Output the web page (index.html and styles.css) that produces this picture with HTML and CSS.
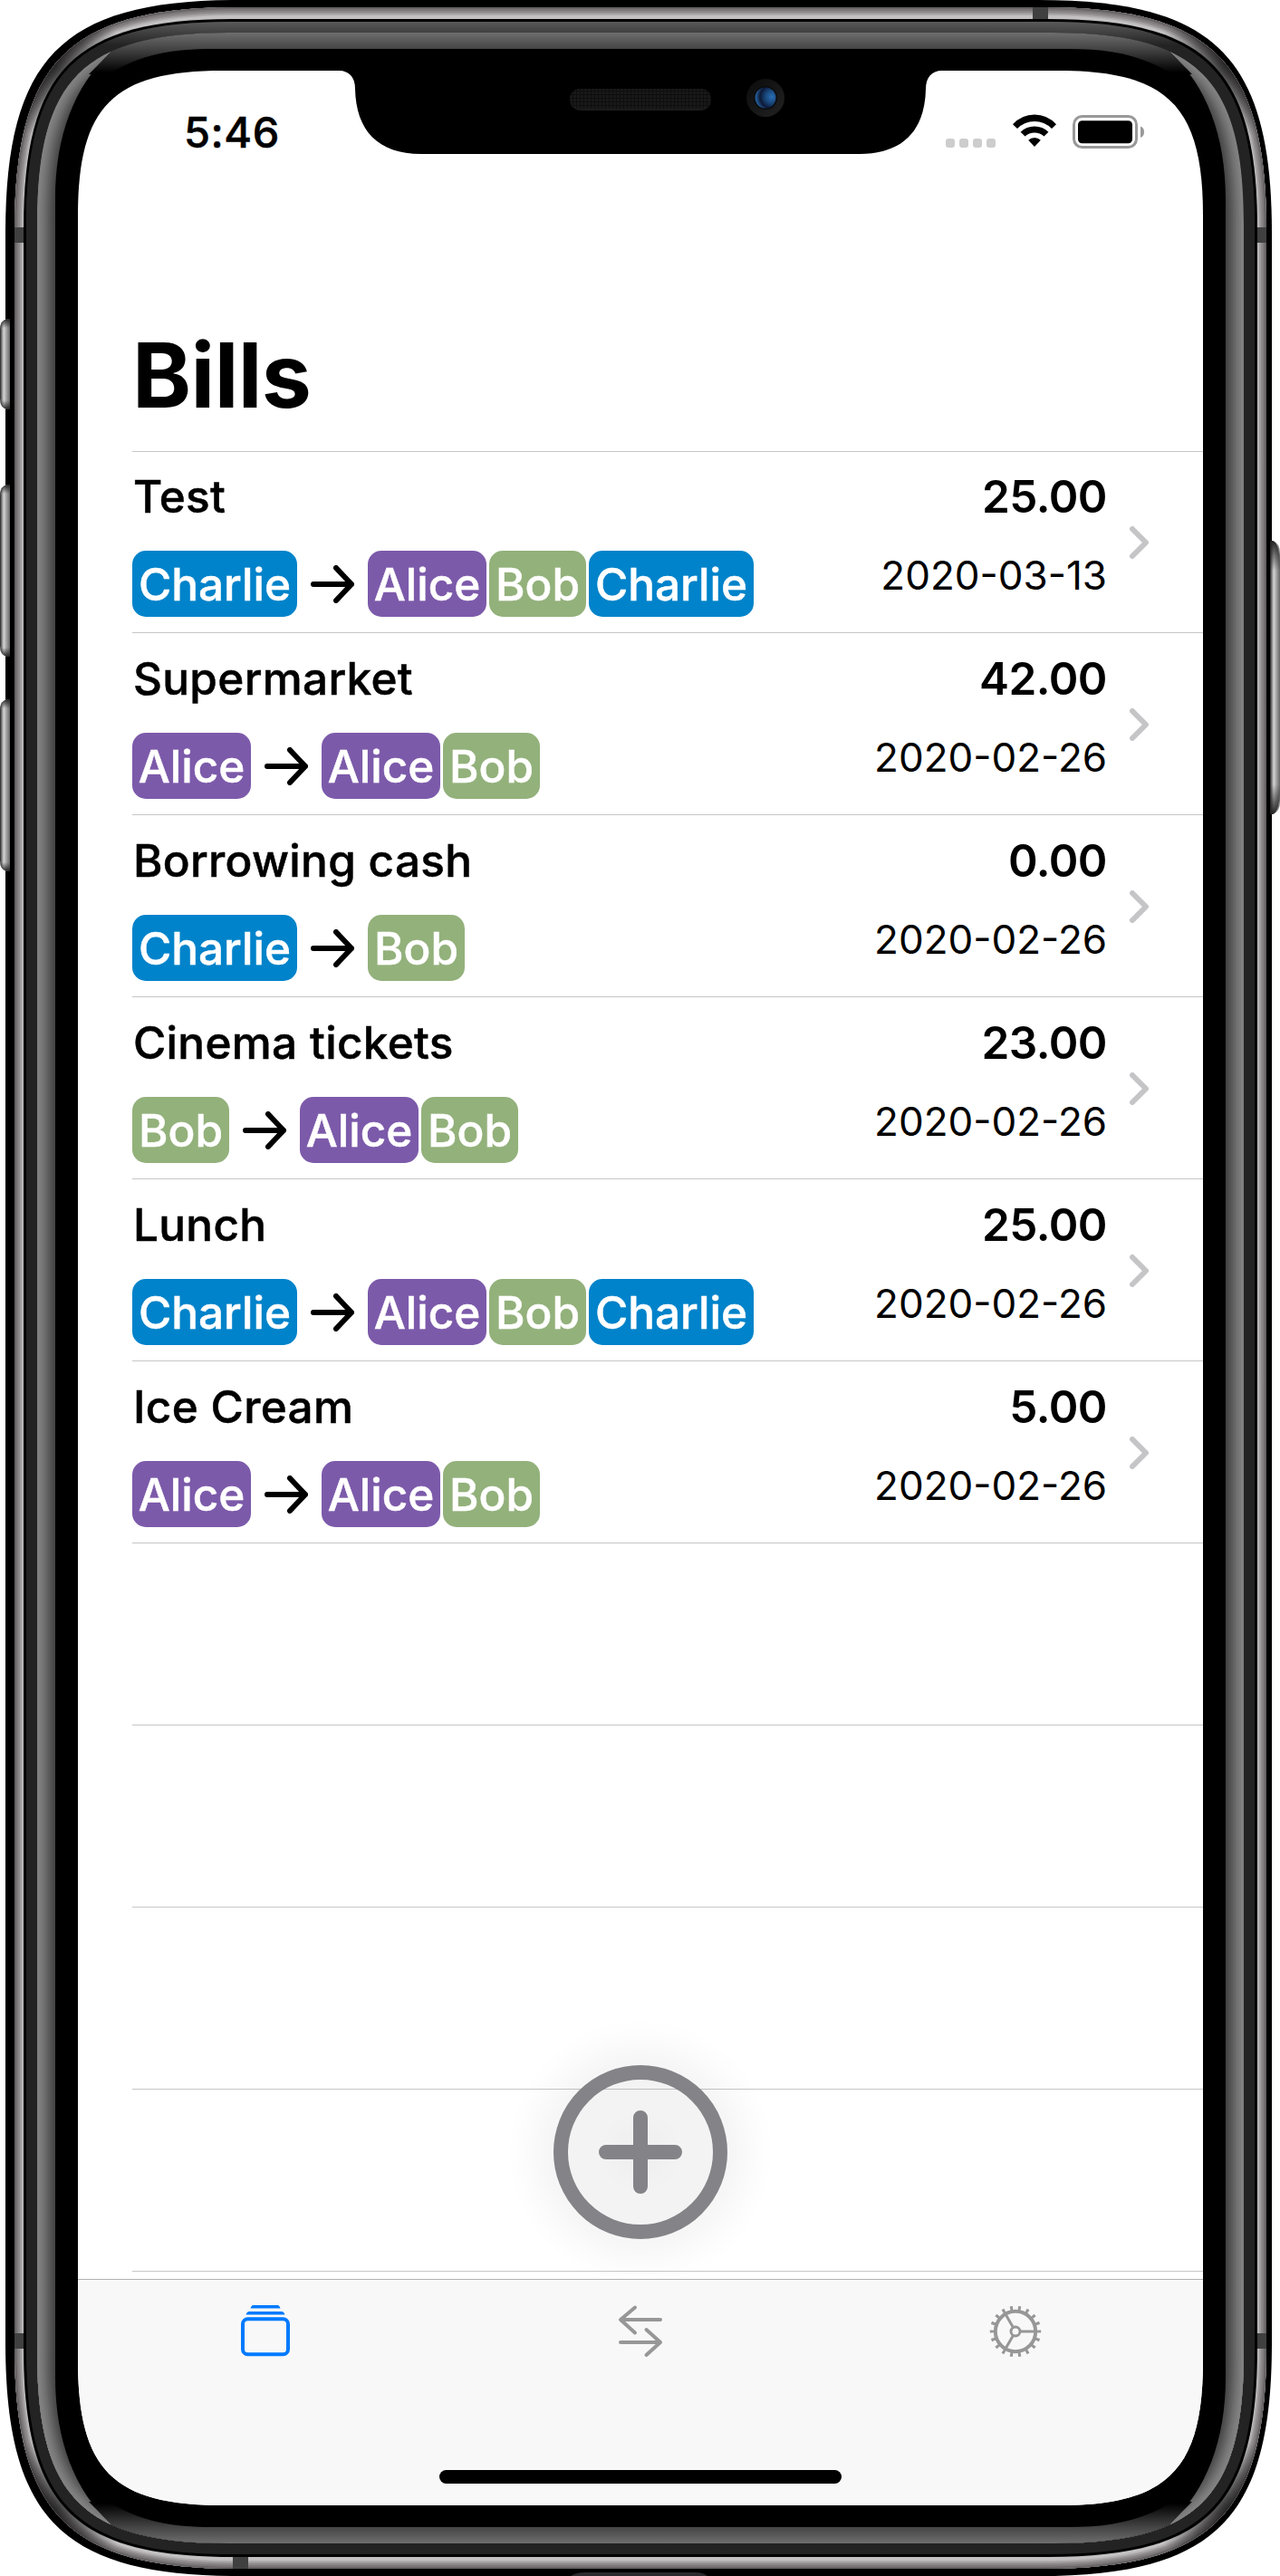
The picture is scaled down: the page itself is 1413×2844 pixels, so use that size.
FILE: index.html
```html
<!DOCTYPE html>
<html lang="en">
<head>
<meta charset="utf-8">
<title>Bills</title>
<link rel="stylesheet" href="styles.css">
</head>
<body>
<div class="device">
  <svg class="bezel" width="1413" height="2844" viewBox="0 0 1413 2844" aria-hidden="true">
    <defs>
      <linearGradient id="band" gradientUnits="userSpaceOnUse" x1="0" y1="24" x2="0" y2="50">
        <stop offset="0" stop-color="#5a5a5a"/><stop offset=".46" stop-color="#404040"/><stop offset="1" stop-color="#232323"/>
      </linearGradient>
      <linearGradient id="glow" gradientUnits="userSpaceOnUse" x1="0" y1="36" x2="0" y2="80">
        <stop offset="0" stop-color="#6e6e6e"/><stop offset=".41" stop-color="#444"/><stop offset="1" stop-color="#000"/>
      </linearGradient>
      <linearGradient id="key" x1="0" x2="1" y1="0" y2="0">
        <stop offset="0" stop-color="#222"/><stop offset=".2" stop-color="#8a8a8a"/><stop offset=".38" stop-color="#d4d4d4"/><stop offset=".65" stop-color="#a2a2a2"/><stop offset="1" stop-color="#666"/>
      </linearGradient>
      <linearGradient id="cap" x1="0" x2="0" y1="0" y2="1">
        <stop offset="0" stop-color="#222"/><stop offset="1" stop-color="#222" stop-opacity="0"/>
      </linearGradient>
      <radialGradient id="shade" gradientUnits="userSpaceOnUse" cx="58" cy="72" r="80">
        <stop offset="0" stop-color="#111" stop-opacity=".75"/><stop offset=".5" stop-color="#111" stop-opacity=".45"/><stop offset="1" stop-color="#111" stop-opacity="0"/>
      </radialGradient>
      <clipPath id="railClip"><path d="M707 8H263C76 8 16 68 16 255V1422H707Z"/></clipPath>
      <clipPath id="ringClip"><path d="M707 36H252C92 36 41 87 41 247V1422H707Z"/></clipPath>
      <path id="rail" d="M720 8H263C76 8 16 68 16 255V1440"/>
      <path id="ring" d="M720 36H252C92 36 41 87 41 247V1440"/>
      <g id="quarter">
        <g clip-path="url(#railClip)" fill="none">
          <rect width="707" height="1422" fill="#c3c1c2"/>
          <use href="#rail" stroke="#b0aeaf" stroke-width="18"/>
          <use href="#rail" stroke="#9f9b9d" stroke-width="15"/>
          <use href="#rail" stroke="#8c888a" stroke-width="12"/>
          <use href="#rail" stroke="#7c787a" stroke-width="8"/>
          <use href="#rail" stroke="#666264" stroke-width="4"/>
          <rect width="200" height="230" fill="url(#shade)"/>
        </g>
        <path d="M707 21H257C82 21 26 77 26 252V1422H707Z"/>
        <path d="M707 24H256C84 24 29 79 29 251V1422H707Z" fill="#232323"/>
        <g clip-path="url(#ringClip)" fill="none">
          <rect width="707" height="1422" fill="#444"/>
          <use href="#ring" stroke="#4b4b4b" stroke-width="36"/>
          <use href="#ring" stroke="#525252" stroke-width="32"/>
          <use href="#ring" stroke="#5a5a5a" stroke-width="28"/>
          <use href="#ring" stroke="#626262" stroke-width="24"/>
          <use href="#ring" stroke="#6a6a6a" stroke-width="20"/>
          <use href="#ring" stroke="#727272" stroke-width="16"/>
          <use href="#ring" stroke="#7a7a7a" stroke-width="11"/>
          <use href="#ring" stroke="#808080" stroke-width="6"/>
          <path d="M707 30H122V58C82 95 61 150 61 220V1422H707Z" fill="#000"/>
          <path d="M707 30H122V58L98 82H120C155 60 190 54 235 54H707Z" fill="url(#glow)"/>
        </g>
      </g>
    </defs>
    <path d="M264 0H1146C1341 0 1404 63 1404 258V2586C1404 2781 1341 2844 1146 2844H264C69 2844 6 2781 6 2586V258C6 63 69 0 264 0Z"/>
    <use href="#quarter"/>
    <use href="#quarter" transform="matrix(-1 0 0 1 1414 0)"/>
    <use href="#quarter" transform="matrix(1 0 0 -1 0 2844)"/>
    <use href="#quarter" transform="matrix(-1 0 0 -1 1414 2844)"/>
    <path fill="url(#band)" d="M29 251C29 79 84 24 256 24H1158C1330 24 1385 79 1385 251H1373V247C1373 87 1322 36 1162 36H252C92 36 41 87 41 247V251Z"/>
    <g fill="#404040">
      <rect x="16" y="251" width="10" height="17"/><rect x="1388" y="251" width="10" height="17"/>
      <rect x="16" y="2576" width="10" height="17"/><rect x="1388" y="2576" width="10" height="17"/>
      <rect x="1140" y="8" width="17" height="13"/><rect x="257" y="2823" width="17" height="13"/>
    </g>
    <g fill="url(#key)">
      <path d="M11 352H8Q0 354 0 364V440Q0 450 8 452H11Z"/>
      <path d="M11 535H8Q0 537 0 547V713Q0 723 8 725H11Z"/>
      <path d="M11 772H8Q0 774 0 784V950Q0 960 8 962H11Z"/>
      <path d="M1402 597H1405Q1413 599 1413 612V884Q1413 897 1405 899H1402Z"/>
    </g>
    <g fill="url(#cap)">
      <path d="M11 352H8Q0 354 0 362H11Z"/><path d="M11 535H8Q0 537 0 545H11Z"/><path d="M11 772H8Q0 774 0 782H11Z"/>
      <path d="M1402 597H1405Q1413 599 1413 630H1402Z"/>
      <path transform="matrix(1 0 0 -1 0 804)" d="M11 352H8Q0 354 0 362H11Z"/>
      <path transform="matrix(1 0 0 -1 0 1260)" d="M11 535H8Q0 537 0 545H11Z"/>
      <path transform="matrix(1 0 0 -1 0 1734)" d="M11 772H8Q0 774 0 782H11Z"/>
      <path transform="matrix(1 0 0 -1 0 1496)" d="M1402 597H1405Q1413 599 1413 630H1402Z"/>
    </g>
    <path d="M630 2844Q636 2840 646 2840H768Q776 2840 781 2844Z" fill="#2b2b2d"/>
  </svg>

  <main class="screen">
    <header class="status">
      <span class="time">5:46</span>
      <span class="indicators">
        <i class="dots"><b></b><b></b><b></b><b></b></i>
        <svg class="wifi" width="48" height="37" viewBox="0 0 48 37">
          <path d="M0 11.2Q10 .5 24 .5T48 11.2L43 16Q35 8 24 8T5 16Z"/>
          <path d="M8.600 19.800Q15 13.500 24 13.500T39.400 19.800L34.500 24.500Q30 20.500 24 20.500T13.500 24.500Z"/>
          <path d="M17.200 28.700Q20 26 24 26T30.800 28.700L24 36Z"/>
        </svg>
        <svg class="battery" width="80" height="38" viewBox="0 0 80 38">
          <rect x="1.500" y="1.500" width="69" height="34" rx="9" fill="none" stroke="#999" stroke-width="3"/>
          <rect x="6" y="6.300" width="60" height="25" rx="4.500"/>
          <path d="M75 12.500Q79 14 79 18.800T75 25Z" fill="#999"/>
        </svg>
      </span>
    </header>
    <svg class="notch" width="680" height="93" viewBox="366 77 680 93" aria-hidden="true">
      <defs>
        <pattern id="mesh" width="4" height="4" patternUnits="userSpaceOnUse"><rect width="4" height="4" fill="#191919"/><path d="M0 0H4M0 0V4" stroke="#0e0e0e" stroke-width="2"/></pattern>
        <radialGradient id="lens" cx=".8" cy=".45" r=".75"><stop offset="0" stop-color="#2a6fb4"/><stop offset=".45" stop-color="#174273"/><stop offset=".75" stop-color="#0e1836"/><stop offset="1" stop-color="#225a94"/></radialGradient>
        <linearGradient id="housing" x1="0" x2="1" y1="0" y2="1"><stop offset="0" stop-color="#0b0b0c"/><stop offset="1" stop-color="#222223"/></linearGradient>
      </defs>
      <path d="M366 77V78H374C386 78 392 86 392 98C393 144 417 170 465 170H949C997 170 1021 144 1022 98C1022 86 1028 78 1040 78H1046V77Z"/>
      <rect x="629" y="98" width="156" height="24" rx="12" fill="#1b1b1b"/>
      <rect x="629" y="98" width="156" height="22" rx="11" fill="url(#mesh)"/>
      <circle cx="845" cy="108" r="21" fill="url(#housing)"/>
      <circle cx="845" cy="108" r="13" fill="#0b0b0d"/>
      <circle cx="845" cy="108" r="11.500" fill="url(#lens)"/>
    </svg>

    <h1 class="heading">Bills</h1>

    <ul class="bills">
      <li class="bill">
        <div class="info"><span class="name">Test</span>
          <div class="people"><span class="chip charlie">Charlie</span><svg class="arrow" viewBox="0 0 48 42"><path d="M3 21H45M28 3L45 21L28 39"/></svg><span class="chip alice">Alice</span><span class="chip bob">Bob</span><span class="chip charlie">Charlie</span></div></div>
        <div class="sums"><span class="amount">25.00</span><span class="date">2020-03-13</span></div>
        <svg class="chevron" viewBox="0 0 22 36"><path d="M3 3L18 18L3 33"/></svg>
      </li>
      <li class="bill">
        <div class="info"><span class="name">Supermarket</span>
          <div class="people"><span class="chip alice">Alice</span><svg class="arrow" viewBox="0 0 48 42"><path d="M3 21H45M28 3L45 21L28 39"/></svg><span class="chip alice">Alice</span><span class="chip bob">Bob</span></div></div>
        <div class="sums"><span class="amount">42.00</span><span class="date">2020-02-26</span></div>
        <svg class="chevron" viewBox="0 0 22 36"><path d="M3 3L18 18L3 33"/></svg>
      </li>
      <li class="bill">
        <div class="info"><span class="name">Borrowing cash</span>
          <div class="people"><span class="chip charlie">Charlie</span><svg class="arrow" viewBox="0 0 48 42"><path d="M3 21H45M28 3L45 21L28 39"/></svg><span class="chip bob">Bob</span></div></div>
        <div class="sums"><span class="amount">0.00</span><span class="date">2020-02-26</span></div>
        <svg class="chevron" viewBox="0 0 22 36"><path d="M3 3L18 18L3 33"/></svg>
      </li>
      <li class="bill">
        <div class="info"><span class="name">Cinema tickets</span>
          <div class="people"><span class="chip bob">Bob</span><svg class="arrow" viewBox="0 0 48 42"><path d="M3 21H45M28 3L45 21L28 39"/></svg><span class="chip alice">Alice</span><span class="chip bob">Bob</span></div></div>
        <div class="sums"><span class="amount">23.00</span><span class="date">2020-02-26</span></div>
        <svg class="chevron" viewBox="0 0 22 36"><path d="M3 3L18 18L3 33"/></svg>
      </li>
      <li class="bill">
        <div class="info"><span class="name">Lunch</span>
          <div class="people"><span class="chip charlie">Charlie</span><svg class="arrow" viewBox="0 0 48 42"><path d="M3 21H45M28 3L45 21L28 39"/></svg><span class="chip alice">Alice</span><span class="chip bob">Bob</span><span class="chip charlie">Charlie</span></div></div>
        <div class="sums"><span class="amount">25.00</span><span class="date">2020-02-26</span></div>
        <svg class="chevron" viewBox="0 0 22 36"><path d="M3 3L18 18L3 33"/></svg>
      </li>
      <li class="bill">
        <div class="info"><span class="name">Ice Cream</span>
          <div class="people"><span class="chip alice">Alice</span><svg class="arrow" viewBox="0 0 48 42"><path d="M3 21H45M28 3L45 21L28 39"/></svg><span class="chip alice">Alice</span><span class="chip bob">Bob</span></div></div>
        <div class="sums"><span class="amount">5.00</span><span class="date">2020-02-26</span></div>
        <svg class="chevron" viewBox="0 0 22 36"><path d="M3 3L18 18L3 33"/></svg>
      </li>
      <li class="bill"></li>
      <li class="bill"></li>
      <li class="bill"></li>
      <li class="bill"></li>
    </ul>

    <svg class="add" width="192" height="192" viewBox="0 0 192 192" role="img" aria-label="Add">
      <circle cx="96" cy="96" r="88"/><path d="M58 96H134M96 58V134"/>
    </svg>

    <footer class="dock">
      <nav class="tabs">
        <svg class="tab active" width="54" height="60" viewBox="0 0 54 60">
          <rect x="2" y="17.200" width="50" height="39" rx="5.500" fill="none" stroke="currentColor" stroke-width="4"/>
          <path fill="currentColor" d="M5.500 12.500Q6.500 9 9 9H45Q47.500 9 48.500 12.500ZM10.500 5.500Q11.500 2 13.500 2H40.500Q42.500 2 43.500 5.500Z"/>
        </svg>
        <svg class="tab" width="54" height="60" viewBox="0 0 54 60" fill="none" stroke="currentColor" stroke-width="4" stroke-linecap="round" stroke-linejoin="round">
          <path d="M49 18H5M21 4.500L5 18L21 32.500M5 43H49M33.500 29L49 43L33.500 57"/>
        </svg>
        <svg class="tab" width="58" height="60" viewBox="-29 -31 58 60" fill="none" stroke="currentColor">
          <circle r="22.200" stroke-width="4"/>
          <circle r="25.700" stroke-width="5" pathLength="18" stroke-dasharray=".34 .66" stroke-dashoffset=".17"/>
          <circle r="5" stroke-width="3"/>
          <path stroke-width="3" d="M6 0H22M-3 5.200L-11 19M-3 -5.200L-11 -19"/>
        </svg>
      </nav>
      <div class="home"></div>
    </footer>
  </main>
</div>
</body>
</html>
```
FILE: styles.css
```css
* { box-sizing: border-box; }

body {
  margin: 0;
  background: #fff;
  color: #000;
  font-family: Inter, "Liberation Sans", sans-serif;
}

.device {
  position: relative;
  width: 1413px;
  height: 2844px;
  padding: 78px 85px 78px 86px;
  overflow: hidden;
}

.bezel {
  position: absolute;
  top: 0;
  left: 0;
}

.screen {
  position: relative;
  display: flex;
  flex-direction: column;
  width: 1242px;
  height: 2688px;
  background: #fff;
  clip-path: path("M160 0H1082C1203 0 1242 39 1242 160V2528C1242 2649 1203 2688 1082 2688H160C39 2688 0 2649 0 2528V160C0 39 39 0 160 0Z");
}

/* Status bar */
.status {
  display: flex;
  justify-content: space-between;
  height: 132px;
  padding: 38px 64px 0 117px;
}

.time {
  font-size: 47px;
  font-weight: 500;
  line-height: 60px;
  letter-spacing: .500px;
  -webkit-text-stroke: .500px currentColor;
}

.indicators {
  display: flex;
  align-items: flex-start;
  padding-top: 11px;
}

.dots {
  display: flex;
  gap: 5px;
  padding-top: 26px;
}

.dots b {
  width: 10px;
  height: 10px;
  border-radius: 3px;
  background: #cdcdcd;
}

.wifi { margin: -1px 18px 0 19px; }

.notch {
  position: absolute;
  top: -1px;
  left: 280px;
}

/* Page title */
.heading {
  height: 288px;
  margin: 0;
  padding: 145px 60px 0;
  font-size: 98.500px;
  font-weight: 700;
  line-height: 120px;
  letter-spacing: -.600px;
}

/* Bill list */
.bills {
  height: 2018px;
  margin: 0 0 0 60px;
  padding: 0;
  list-style: none;
  box-shadow: inset 0 1px #c6c6c8;
}

.bill {
  display: flex;
  height: 201px;
  padding: 20px 59px 0 0;
  border-bottom: 1px solid #c6c6c8;
}

.info { flex: 1; }

.name {
  display: block;
  padding-left: 1px;
  font-size: 49.500px;
  font-weight: 500;
  line-height: 60px;
  letter-spacing: .300px;
  -webkit-text-stroke: .500px currentColor;
}

.people {
  display: flex;
  align-items: center;
  margin-top: 30px;
}

.chip {
  height: 73px;
  padding-top: 1px;
  border-radius: 15px;
  color: #fff;
  font-size: 49.500px;
  font-weight: 500;
  line-height: 73px;
  text-align: center;
  -webkit-text-stroke: .500px currentColor;
}

.chip + .chip { margin-left: 3px; }
.alice { width: 131px; background: #7c5aaa; }
.bob { width: 107px; background: #93b17b; }
.charlie { width: 182px; background: #0083ca; }

.arrow {
  width: 48px;
  height: 42px;
  margin: 0 15px;
  fill: none;
  stroke: #000;
  stroke-width: 6;
  stroke-linecap: round;
  stroke-linejoin: round;
}

.sums {
  display: flex;
  flex-direction: column;
  align-items: flex-end;
}

.amount {
  font-size: 49.500px;
  font-weight: 600;
  line-height: 60px;
  letter-spacing: -.500px;
}

.date {
  margin-top: 27px;
  font-size: 44px;
  line-height: 60px;
}

.chevron {
  width: 22px;
  height: 36px;
  margin: 63px 0 0 25px;
  fill: none;
  stroke: #c5c5c7;
  stroke-width: 6;
  stroke-linecap: round;
  stroke-linejoin: round;
}

/* Floating add button */
.add {
  position: absolute;
  top: 2202px;
  left: 525px;
  overflow: visible;
  fill: none;
  stroke: #7d7c81;
  stroke-width: 16;
  stroke-linecap: round;
  opacity: .94;
  filter: drop-shadow(0 0 30px rgba(0, 0, 0, .2));
}

/* Tab bar */
.dock {
  position: relative;
  flex: 1;
  display: flex;
  flex-direction: column;
  align-items: center;
  justify-content: space-between;
  padding: 26px 0 24px;
  border-top: 1px solid #b2b2b2;
  background: #f8f8f8;
}

.tabs {
  display: grid;
  grid-template-columns: repeat(3, 1fr);
  width: 100%;
  justify-items: center;
}

.tab { color: #979797; }
.tab.active { color: #007aff; }

.home {
  width: 444px;
  height: 15px;
  border-radius: 8px;
  background: #000;
}
```
